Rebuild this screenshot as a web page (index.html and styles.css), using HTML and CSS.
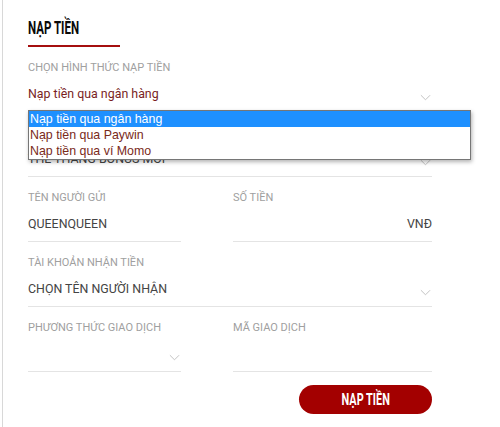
FILE: index.html
```html
<!DOCTYPE html>
<html lang="vi">
<head>
<meta charset="utf-8">
<title>Nạp tiền</title>
<link rel="stylesheet" href="styles.css">
</head>
<body>
<div class="panel">
  <div class="form">
    <div class="head">
      <h1 class="title"><span class="narrow">NẠP TIỀN</span></h1>
      <div class="title-line"></div>
    </div>

    <div class="field full">
      <div class="label">CHỌN HÌNH THỨC NẠP TIỀN</div>
      <div class="value value-red">Nạp tiền qua ngân hàng<svg class="chev" viewBox="0 0 12 7"><polyline points="1,1 6,6 11,1"/></svg></div>
      <div class="menu">
        <div class="opt opt-active">Nạp tiền qua ngân hàng</div>
        <div class="opt">Nạp tiền qua Paywin</div>
        <div class="opt">Nạp tiền qua ví Momo</div>
      </div>
    </div>

    <div class="field full">
      <div class="label">CHỌN KHUYẾN MÃI</div>
      <div class="value value-dark">THẺ THÀNG BONUS MỚI<svg class="chev" viewBox="0 0 12 7"><polyline points="1,1 6,6 11,1"/></svg></div>
    </div>

    <div class="row">
      <div class="field">
        <div class="label">TÊN NGƯỜI GỬI</div>
        <div class="value value-dark">QUEENQUEEN</div>
      </div>
      <div class="field">
        <div class="label">SỐ TIỀN</div>
        <div class="value value-dark value-end">VNĐ</div>
      </div>
    </div>

    <div class="field full">
      <div class="label">TÀI KHOẢN NHẬN TIỀN</div>
      <div class="value value-dark">CHỌN TÊN NGƯỜI NHẬN<svg class="chev" viewBox="0 0 12 7"><polyline points="1,1 6,6 11,1"/></svg></div>
    </div>

    <div class="row">
      <div class="field">
        <div class="label">PHƯƠNG THỨC GIAO DỊCH</div>
        <div class="value value-dark"><svg class="chev" viewBox="0 0 12 7"><polyline points="1,1 6,6 11,1"/></svg></div>
      </div>
      <div class="field">
        <div class="label">MÃ GIAO DỊCH</div>
        <div class="value value-dark"></div>
      </div>
    </div>

    <div class="actions">
      <button class="btn"><span class="narrow">NẠP TIỀN</span></button>
    </div>
  </div>
</div>
</body>
</html>
```

FILE: styles.css
```css
* { box-sizing: border-box; }
html, body { margin: 0; padding: 0; background: #fff; }
body {
  font-family: Roboto, "Liberation Sans", Arial, sans-serif;
  width: 500px;
  height: 427px;
  overflow: hidden;
}
.panel {
  margin-left: 2px;
  border-left: 1px solid #d8d8d8;
  height: 427px;
  padding-left: 25px;
}
.form {
  width: 404px;
}
.head {
  padding-top: 18px;
}
.narrow {
  display: inline-block;
  transform: scaleX(0.64);
  transform-origin: left center;
}
.title {
  margin: 0;
  font-family: Roboto, "Liberation Sans", sans-serif;
  font-weight: 700;
  font-size: 18px;
  line-height: 20px;
  color: #0a0a0a;
}
.title-line {
  margin-top: 7px;
  width: 92px;
  height: 2px;
  background: #a50f0f;
}
.field {
  position: relative;
  padding-top: 14px;
  padding-bottom: 7px;
  border-bottom: 1px solid #e4e4e4;
}
.label {
  font-size: 11px;
  line-height: 14px;
  color: #a0a0a0;
  margin-bottom: 9px;
}
.value {
  display: flex;
  align-items: center;
  justify-content: space-between;
  height: 20px;
  font-size: 12.4px;
  line-height: 20px;
}
.value-red { color: #7a1f1f; }
.value-dark { color: #444; }
.value-end { justify-content: flex-end; }
.chev {
  width: 11px;
  height: 7px;
  margin-right: 1px;
  margin-top: 6px;
  margin-left: auto;
  fill: none;
  stroke: #bdbdbd;
  stroke-width: 1;
}
.row {
  display: grid;
  grid-template-columns: 153px 199px;
  column-gap: 52px;
}
.menu {
  position: absolute;
  left: 0;
  top: 63px;
  width: 443px;
  background: #fff;
  border: 1px solid #767676;
  box-shadow: 1px 2px 4px rgba(0,0,0,0.3);
  z-index: 5;
  font-family: "Liberation Sans", Arial, sans-serif;
  font-size: 12.4px;
}
.opt {
  height: 16px;
  line-height: 16px;
  padding-left: 1px;
  color: #7a2a1a;
}
.opt-active {
  background: #1e90ff;
  color: #fff;
}
.actions {
  display: flex;
  justify-content: flex-end;
  padding-top: 13px;
}
.btn {
  width: 133px;
  height: 29px;
  border: none;
  border-radius: 15px;
  background: #a30000;
  color: #fff;
  font-family: Roboto, "Liberation Sans", sans-serif;
  font-weight: 700;
  font-size: 17px;
  line-height: 29px;
  padding: 0;
  cursor: pointer;
  text-align: center;
}
.btn .narrow {
  transform-origin: center center;
}
```
